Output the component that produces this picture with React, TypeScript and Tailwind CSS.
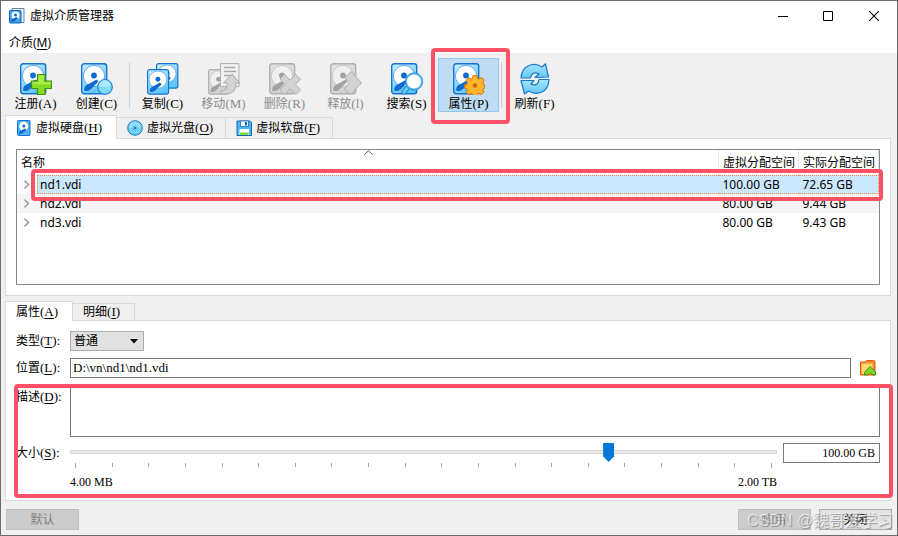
import { useState, type ReactNode } from 'react';
import clsx from 'clsx';

const BLUE = { light: '#c9f1ff', mid: '#5cc4f7', line: '#1873cf', arm: '#0f6bd0', disc: '#ffffff', discLine: '#4a9ae0' };
const GRAY = { light: '#e2e2e2', mid: '#cfcfcf', line: '#b0b0b0', arm: '#a2a2a2', disc: '#f0f0f0', discLine: '#c2c2c2' };

type Palette = typeof BLUE;

const Disk = ({ p, id }: { p: Palette; id: string }) => (
  <>
    <defs>
      <linearGradient id={id} x1="0" y1="0" x2="0.6" y2="1">
        <stop offset="0" stopColor={p.light} />
        <stop offset="1" stopColor={p.mid} />
      </linearGradient>
    </defs>
    <rect x="0.7" y="0.7" width="25" height="30" rx="2.5" fill={`url(#${id})`} stroke={p.line} strokeWidth="1.4" />
    <circle cx="13" cy="13" r="10.6" fill={p.disc} stroke={p.discLine} strokeWidth="0.8" />
    <path d="M15.500 16.500 L17.500 18.500 L9.500 26.500 Q6 29 3.200 27.500 Q2.800 25 4.500 22.800 Z" fill={p.arm} />
    <circle cx="13" cy="12.500" r="2.900" fill={p.arm} />
  </>
);

const Svg = ({ size = 32, children }: { size?: number; children: ReactNode }) => (
  <svg width={size} height={size} viewBox="0 0 32 32" aria-hidden="true" className="shrink-0">
    {children}
  </svg>
);

const AddIcon = () => (
  <Svg>
    <Disk p={BLUE} id="dAdd" />
    <path d="M17.500 11.500h7.500v6.500h6.500v7.500h-6.500v6h-7.500v-6h-6v-7.500h6z" fill="#86dd1f" stroke="#43920a" strokeWidth="1.200" />
    <path d="M18.500 12.500h5.500v6.500h6.500v2.500H12.500v-2.500h6z" fill="#b8f25c" opacity="0.7" />
  </Svg>
);

const CreateIcon = () => (
  <Svg>
    <Disk p={BLUE} id="dNew" />
    <circle cx="24" cy="24" r="7.300" fill="#7fd9fb" stroke="#1f86d6" strokeWidth="1.200" />
    <path d="M18 23a6 6 0 0 1 12 0q-6 2-12 0z" fill="#aeeafd" />
  </Svg>
);

const CopyIcon = () => (
  <Svg>
    <g transform="translate(9 0) scale(0.85 0.82)">
      <Disk p={BLUE} id="dCopyBack" />
    </g>
    <g transform="translate(0 6) scale(0.84 0.82)">
      <Disk p={BLUE} id="dCopyFront" />
    </g>
  </Svg>
);

const MoveIcon = () => (
  <Svg>
    <g transform="translate(0 6) scale(0.8 0.82)">
      <Disk p={GRAY} id="dMove" />
    </g>
    <path d="M12.500 0.600h18.500v23h-18.500z" fill="#f0f0f0" stroke="#b0b0b0" />
    <path d="M16 4.500h11M16 8.500h12M16 12.500h8" stroke="#a8a8a8" strokeWidth="1.300" />
    <path d="M24 11 L31.500 20 H28 Q28 31 18 31 H13 V28 Q20 28 19 20 H15.500 Z" fill="#d4d4d4" stroke="#acacac" />
  </Svg>
);

const RemoveIcon = () => (
  <Svg>
    <Disk p={GRAY} id="dRemove" />
    <path d="M15.500 11.500 L21 17 L26.500 11.500 L31.500 16 L26.500 21.500 L31.500 27 L27 31.500 L21 26 L15.500 31.500 L11 27 L16 21.500 L11 16 Z" fill="#d2d2d2" stroke="#b0b0b0" />
  </Svg>
);

const ReleaseIcon = () => (
  <Svg>
    <Disk p={GRAY} id="dRelease" />
    <path d="M21 8.500 L31.500 20 L20.500 31.500 L14 26 L19 20 L15 14.500 Z" fill="#d2d2d2" stroke="#b0b0b0" />
  </Svg>
);

const SearchIcon = () => (
  <Svg>
    <Disk p={BLUE} id="dSearch" />
    <path d="M17 24 L13 29" stroke="#1b86d6" strokeWidth="5" strokeLinecap="round" />
    <path d="M17 24 L13 29" stroke="#63cdfa" strokeWidth="3" strokeLinecap="round" />
    <circle cx="23" cy="18.500" r="8" fill="#ffffff" stroke="#4fb7ef" strokeWidth="1.800" />
    <circle cx="23" cy="18.500" r="8.700" fill="none" stroke="#1b7ed0" strokeWidth="0.600" />
  </Svg>
);

const PropsIcon = () => (
  <Svg>
    <Disk p={BLUE} id="dProps" />
    <g fill="#ffb62e" stroke="#d9700c" strokeWidth="1">
      <path d="M20 12.600h4l.6 2.800 1.600.7 2.600-1.500 2.500 2.800-1.400 2.200.6 1.700 1.200.5v3.400l-1.500.5-.5 1.400 1.300 2-2.600 2.600-2.400-1.300-1.500.7-.5 1.600h-4l-.5-1.600-1.500-.7-2.300 1.300-2.600-2.600 1.200-2-.6-1.400-2-.5v-3.400l2-.5.7-1.700-1.300-2.200 2.600-2.800 2.400 1.500 1.600-.7z" />
      <circle cx="22" cy="22.500" r="2" fill="#c9660c" />
    </g>
  </Svg>
);

const RefreshIcon = () => (
  <Svg>
    <defs>
      <linearGradient id="gRefresh" x1="0" y1="0" x2="0" y2="1">
        <stop offset="0" stopColor="#a5e6fd" />
        <stop offset="1" stopColor="#63c6f6" />
      </linearGradient>
    </defs>
    <g fill="url(#gRefresh)" stroke="#1878c8" strokeWidth="1.200" strokeLinejoin="round">
      <path d="M2 15 Q2.500 6 9 3 Q16 -0.500 23 4 L26.500 0.800 L29.500 14 L16 14.500 L20 11 Q13 7.500 11.500 15 Z" />
      <path d="M30 16.500 Q29.500 26 23 29 Q16 32 9.500 28 L5.500 31 L2 17.500 H15 L12 21 Q19 24 20 16.500 Z" />
    </g>
  </Svg>
);

const HardDiskIcon = () => (
  <Svg size={16}>
    <g transform="translate(2 0)">
      <rect x="1" y="1" width="25" height="30" rx="2" fill="#4db1f2" stroke="#146fc8" strokeWidth="2" />
      <circle cx="13.500" cy="12.500" r="9" fill="#ffffff" />
      <path d="M16 17 L19 20 L10 27 L4 28 L5 23 Z" fill="#1068c8" />
      <circle cx="13.500" cy="12" r="3" fill="#1068c8" />
    </g>
  </Svg>
);

const OpticalIcon = () => (
  <Svg size={16}>
    <circle cx="16" cy="16" r="14.500" fill="#6fd2f9" stroke="#1672b8" strokeWidth="2" />
    <path d="M4 15 A12 12 0 0 1 28 15 Q16 19 4 15 Z" fill="#93e0fc" />
    <circle cx="16" cy="16" r="4" fill="#9fe1fb" stroke="#3d9cd2" strokeWidth="1.500" />
    <circle cx="16" cy="16" r="2" fill="#125a98" />
  </Svg>
);

const FloppyIcon = () => (
  <Svg size={16}>
    <path d="M2 2h26l3 3v26H2z" fill="#4db6f3" stroke="#1266b4" strokeWidth="2" />
    <path d="M9 2h16v11H9z" fill="#ffffff" stroke="#1266b4" strokeWidth="1.500" />
    <path d="M18 4h4v7h-4z" fill="#1266b4" />
    <path d="M7 18h19v12H7z" fill="#ffffff" />
    <path d="M8 25h17v5H8z" fill="#82d82c" />
  </Svg>
);

const WindowIcon = () => (
  <Svg size={16}>
    <path d="M6 1h24v28H6z" fill="#eef3f7" stroke="#6d7f90" strokeWidth="2" />
    <rect x="1" y="5" width="23" height="25" rx="2" fill="#3ba3ef" stroke="#0f62b8" strokeWidth="2" />
    <circle cx="13" cy="15" r="8" fill="#ffffff" />
    <path d="M15 18 L18 21 L9 27 L4 27 L5 23 Z" fill="#0f62b8" />
    <circle cx="13" cy="14" r="3" fill="#0f62b8" />
  </Svg>
);

const FolderIcon = () => (
  <Svg size={16}>
    <path d="M1 4h9l3-3h14q3 0 3 3v26H1z" fill="#f58a2a" stroke="#dd5b12" strokeWidth="2" />
    <path d="M3 7h22v21H3z" fill="#ffd874" />
    <path d="M20 13 L31 24 V30 H26 L20 25 L15 30 H9 V25 Z" fill="#7fdc26" stroke="#3c8f0b" strokeWidth="2" />
  </Svg>
);

// Chinese caption followed by its accelerator key
const Caption = ({ text, hotkey, underline = true, colon = false }: { text: string; hotkey: string; underline?: boolean; colon?: boolean }) => (
  <span className="whitespace-nowrap">
    {text}
    <span className="font-['Liberation_Serif',serif] text-[13px]">
      (<span className={clsx(underline && 'underline underline-offset-2')}>{hotkey}</span>){colon && ':'}
    </span>
  </span>
);

const Separator = () => <div className="mx-0.5 my-1 w-px self-stretch bg-[#d0d0d0]" />;

const ToolButton = ({ icon, text, hotkey, disabled, active }: { icon: ReactNode; text: string; hotkey: string; disabled?: boolean; active?: boolean }) => (
  <div className={clsx('relative', active && 'ml-px')}>
    <button
      disabled={disabled}
      className={clsx(
        'flex h-[54px] w-[61px] flex-col items-center border pt-1 leading-[17px]',
        active ? 'border-[#90c8f6] bg-[#c0dcf3]' : 'border-transparent',
        disabled && 'text-[#8c8c8c]'
      )}
    >
      {icon}
      <Caption text={text} hotkey={hotkey} underline={false} />
    </button>
    {active && <div className="pointer-events-none absolute -top-2.5 -right-[11px] -bottom-3 -left-[7px] z-10 rounded border-4 border-[#ff5166]" />}
  </div>
);

const Tab = ({ icon, text, hotkey, active, onClick }: { icon?: ReactNode; text: string; hotkey: string; active: boolean; onClick: () => void }) => (
  <button
    role="tab"
    aria-selected={active}
    onClick={onClick}
    className={clsx(
      'flex items-center gap-1 border-[#d9d9d9] pl-2.5',
      icon && !active ? 'pr-3' : 'pr-3.5',
      active ? '-mb-px border border-b-0 bg-white' : 'mt-0.5 border-t border-r bg-[#f0f0f0]'
    )}
  >
    {icon}
    <Caption text={text} hotkey={hotkey} />
  </button>
);

const media = [
  { name: 'nd1.vdi', virtualSize: '100.00 GB', actualSize: '72.65 GB' },
  { name: 'nd2.vdi', virtualSize: '80.00 GB', actualSize: '9.44 GB' },
  { name: 'nd3.vdi', virtualSize: '80.00 GB', actualSize: '9.43 GB' },
];

const ticks = Array.from({ length: 20 }, (_, i) => i);

const MediaTable = () => {
  const [selected, setSelected] = useState('nd1.vdi');

  return (
    <div className="relative min-h-[136px] flex-1 border border-[#828790] bg-white">
      <table className="w-full table-fixed border-collapse font-['Noto_Sans','Noto_Sans_CJK_SC',sans-serif]">
        <colgroup>
          <col />
          <col className="w-20" />
          <col className="w-20" />
        </colgroup>
        <thead>
          <tr className="h-[25px] text-left leading-4">
            <th className="relative pl-1 font-normal">
              <svg className="absolute top-0 left-1/2 -ml-1" width="9" height="5" viewBox="0 0 9 5" aria-hidden="true">
                <path d="M0.500 4.500 L4.500 0.700 L8.500 4.500" fill="none" stroke="#555555" />
              </svg>
              名称
            </th>
            <th className="border-l border-[#e5e5e5] pl-1 font-normal whitespace-nowrap">虚拟分配空间</th>
            <th className="border-x border-[#e5e5e5] pl-1 font-normal whitespace-nowrap">实际分配空间</th>
          </tr>
        </thead>
        <tbody>
          {media.map((m, i) => {
            const isSelected = m.name === selected;
            const cell = clsx('h-[19px] p-0', isSelected ? 'border-y border-dotted border-[#f08a3c] bg-[#cce8ff] leading-[17px]' : 'leading-[19px]');
            return (
              <tr key={m.name} onClick={() => setSelected(m.name)} className={i % 2 ? 'bg-[#f5f5f5]' : 'bg-white'}>
                <td className="h-[19px] p-0">
                  <div className="flex items-center">
                    <svg className="mx-1.5 shrink-0" width="8" height="9" viewBox="0 0 8 9" aria-hidden="true">
                      <path d="M1.500 0.700 L5.500 4.500 L1.500 8.300" fill="none" stroke="#a0a0a0" strokeWidth="1.600" />
                    </svg>
                    <div className={clsx(cell, 'flex-1', isSelected ? 'border-l pl-0.5' : 'pl-[3px]')}>{m.name}</div>
                  </div>
                </td>
                <td className="p-0">
                  <div className={clsx(cell, 'pl-1')}>{m.virtualSize}</div>
                </td>
                <td className="p-0">
                  <div className={clsx(cell, 'pl-1', isSelected && 'border-r')}>{m.actualSize}</div>
                </td>
              </tr>
            );
          })}
        </tbody>
      </table>
      <div className="pointer-events-none absolute top-[19px] -right-1 left-3.5 z-10 h-8 rounded border-4 border-[#ff5166]" />
    </div>
  );
};

const PropertiesForm = () => {
  const [size, setSize] = useState(766);

  return (
    <div className="relative grid grid-cols-[54px_1fr] border border-[#d9d9d9] bg-white p-2.5">
      <label htmlFor="type" className="h-5 leading-5">
        <Caption text="类型" hotkey="T" colon />
      </label>
      <div className="relative h-5 w-[74px]">
        <select id="type" className="block h-5 w-full appearance-none border border-[#adadad] bg-[#e1e1e1] pl-[3px] leading-[18px]">
          <option>普通</option>
        </select>
        <svg className="pointer-events-none absolute top-2 right-1.5" width="8" height="5" viewBox="0 0 8 5" aria-hidden="true">
          <path d="M0 0h8L4 4.500z" fill="#000000" />
        </svg>
      </div>

      <label htmlFor="location" className="mt-[7px] h-5 leading-5">
        <Caption text="位置" hotkey="L" colon />
      </label>
      <div className="mt-[7px] flex h-5 items-center gap-[9px]">
        <input
          id="location"
          defaultValue="D:\vn\nd1\nd1.vdi"
          className="h-5 min-w-0 flex-1 border border-[#7a7a7a] px-0.5 font-['Liberation_Serif',serif] text-[13px]"
        />
        <button aria-label="选择位置" className="mr-1">
          <FolderIcon />
        </button>
      </div>

      <label htmlFor="description" className="mt-[9px] h-5 leading-5">
        <Caption text="描述" hotkey="D" colon />
      </label>
      <textarea id="description" className="mt-[7px] block h-[52px] w-full resize-none border border-[#7a7a7a] px-1" />

      <label htmlFor="size" className="mt-1.5 h-5 leading-5">
        <Caption text="大小" hotkey="S" colon />
      </label>
      <div className="mt-1.5 flex items-start gap-1.5 font-['Liberation_Serif',serif]">
        <div className="flex-1">
          <div className="relative flex h-[19px] items-center">
            <div className="absolute inset-x-0 top-[7px] h-1 border border-[#d6d6d6] bg-[#e7eaea]" />
            <input
              id="size"
              type="range"
              min={0}
              max={1000}
              value={size}
              onChange={(e) => setSize(Number(e.target.value))}
              className="relative h-[19px] w-full appearance-none bg-transparent [&::-webkit-slider-thumb]:h-[19px] [&::-webkit-slider-thumb]:w-[11px] [&::-webkit-slider-thumb]:appearance-none [&::-webkit-slider-thumb]:bg-[#0078d7] [&::-webkit-slider-thumb]:[clip-path:polygon(0_0,100%_0,100%_70%,50%_100%,0_70%)]"
            />
          </div>
          <div className="mt-px flex h-[5px] justify-between px-[5px]">
            {ticks.map((t) => (
              <span key={t} className={clsx('w-px bg-[#a5a598]', t === 0 || t === 19 ? 'h-[5px]' : 'h-1')} />
            ))}
          </div>
          <div className="mt-[7px] flex justify-between leading-[15px]">
            <span>4.00 MB</span>
            <span>2.00 TB</span>
          </div>
        </div>
        <input
          aria-label="大小"
          defaultValue="100.00 GB"
          className="h-5 w-[97px] border border-[#7a7a7a] px-1 text-right"
        />
      </div>
      <div className="pointer-events-none absolute top-[63px] -right-[3px] bottom-0.5 left-2 z-10 rounded border-4 border-[#ff5166]" />
    </div>
  );
};

export default function App() {
  const [mediaTab, setMediaTab] = useState(0);
  const [detailTab, setDetailTab] = useState(0);

  return (
    <div className="flex min-h-screen flex-col border border-[#6b6b6b] bg-[#f0f0f0] font-['Liberation_Sans','Noto_Sans_CJK_SC',sans-serif] text-[12px] leading-4 text-black">
      {/* Title bar */}
      <header className="bg-white font-['Noto_Sans','Noto_Sans_CJK_SC',sans-serif]">
        <div className="flex h-[30px] items-center pl-2">
          <WindowIcon />
          <h1 className="ml-[5px] flex-1">虚拟介质管理器</h1>
          <button aria-label="最小化" className="flex h-full w-11 items-center justify-center">
            <svg width="10" height="10" viewBox="0 0 10 10"><path d="M0 5.500h10" stroke="#000000" /></svg>
          </button>
          <button aria-label="最大化" className="flex h-full w-[46px] items-center justify-center">
            <svg width="10" height="10" viewBox="0 0 10 10"><path d="M0.500 0.500h9v9h-9z" fill="none" stroke="#000000" /></svg>
          </button>
          <button aria-label="关闭窗口" className="flex h-full w-[46px] items-center justify-center">
            <svg width="10" height="10" viewBox="0 0 10 10"><path d="M0 0 L10 10 M10 0 L0 10" stroke="#000000" strokeWidth="1.100" /></svg>
          </button>
        </div>
        <nav className="flex h-[22px] items-center pt-0.5 pl-2">
          <button>
            介质(<span className="underline underline-offset-2">M</span>)
          </button>
        </nav>
      </header>

      {/* Toolbar */}
      <div className="flex pt-[5px] pb-[3px] pl-1">
        <ToolButton icon={<AddIcon />} text="注册" hotkey="A" />
        <ToolButton icon={<CreateIcon />} text="创建" hotkey="C" />
        <Separator />
        <ToolButton icon={<CopyIcon />} text="复制" hotkey="C" />
        <ToolButton icon={<MoveIcon />} text="移动" hotkey="M" disabled />
        <ToolButton icon={<RemoveIcon />} text="删除" hotkey="R" disabled />
        <ToolButton icon={<ReleaseIcon />} text="释放" hotkey="l" disabled />
        <ToolButton icon={<SearchIcon />} text="搜索" hotkey="S" />
        <ToolButton icon={<PropsIcon />} text="属性" hotkey="P" active />
        <Separator />
        <ToolButton icon={<RefreshIcon />} text="刷新" hotkey="F" />
      </div>

      <main className="flex flex-1 flex-col pr-1.5 pl-1">
        <div role="tablist" className="z-1 flex h-[23px]">
          <Tab icon={<HardDiskIcon />} text="虚拟硬盘" hotkey="H" active={mediaTab === 0} onClick={() => setMediaTab(0)} />
          <Tab icon={<OpticalIcon />} text="虚拟光盘" hotkey="O" active={mediaTab === 1} onClick={() => setMediaTab(1)} />
          <Tab icon={<FloppyIcon />} text="虚拟软盘" hotkey="F" active={mediaTab === 2} onClick={() => setMediaTab(2)} />
        </div>
        <section className="flex flex-1 flex-col border border-[#d9d9d9] bg-white p-2.5">
          <MediaTable />
        </section>

        <div role="tablist" className="z-1 mt-[5px] flex h-[19px]">
          <Tab text="属性" hotkey="A" active={detailTab === 0} onClick={() => setDetailTab(0)} />
          <Tab text="明细" hotkey="I" active={detailTab === 1} onClick={() => setDetailTab(1)} />
        </div>
        <PropertiesForm />
      </main>

      {/* Footer */}
      <footer className="relative flex gap-2 pt-2 pr-[5px] pb-[5px] pl-[5px]">
        <button disabled className="mr-auto h-[21px] w-[73px] border border-[#bfbfbf] bg-[#cccccc] text-[#838383]">默认</button>
        <button disabled className="h-[21px] w-[73px] border border-[#bfbfbf] bg-[#cccccc] text-[#838383]">应用</button>
        <button className="h-[21px] w-[73px] border border-[#adadad] bg-[#e1e1e1]">关闭</button>
        <div className="pointer-events-none absolute right-1 bottom-0.5 text-[16px] leading-6 whitespace-nowrap text-white/60 [text-shadow:1px_1px_1px_#707070aa]">
          CSDN @魏哥爱学习
        </div>
      </footer>
    </div>
  );
}
